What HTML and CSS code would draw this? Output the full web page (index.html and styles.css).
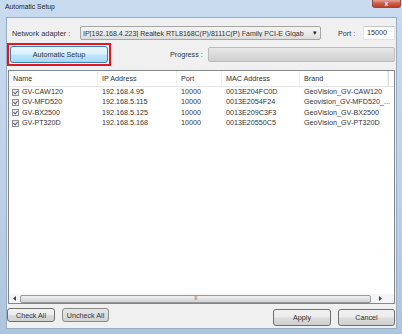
FILE: index.html
```html
<!DOCTYPE html>
<html>
<head>
<meta charset="utf-8">
<link rel="stylesheet" href="styles.css">
</head>
<body>
<div class="window">
  <div class="titlebar">
    <span class="title">Automatic Setup</span>
    <span class="close">x</span>
  </div>
  <div class="client">
    <div class="row-adapter">
      <span class="lbl-adapter">Network adapter :</span>
      <div class="combo"><span class="combo-text">IP[192.168.4.223] Realtek RTL8168C(P)/8111C(P) Family PCI-E Gigab</span><span class="combo-arrow">&#9662;</span></div>
      <span class="lbl-port">Port :</span>
      <div class="port">15000</div>
    </div>
    <div class="row-setup">
      <div class="highlight"><div class="btn btn-auto">Automatic Setup</div></div>
      <span class="lbl-progress">Progress :</span>
      <div class="progress"></div>
    </div>
    <div class="list">
      <div class="list-head">
        <span class="col c-name">Name</span>
        <span class="col c-ip">IP Address</span>
        <span class="col c-port">Port</span>
        <span class="col c-mac">MAC Address</span>
        <span class="col c-brand">Brand</span>
        <span class="col c-rest"></span>
      </div>
      <div class="list-body">
        <div class="list-row">
          <span class="col c-name"><span class="chk"></span>GV-CAW120</span>
          <span class="col c-ip">192.168.4.95</span>
          <span class="col c-port">10000</span>
          <span class="col c-mac">0013E204FC0D</span>
          <span class="col c-brand">GeoVision_GV-CAW120</span>
        </div>
        <div class="list-row">
          <span class="col c-name"><span class="chk"></span>GV-MFD520</span>
          <span class="col c-ip">192.168.5.115</span>
          <span class="col c-port">10000</span>
          <span class="col c-mac">0013E2054F24</span>
          <span class="col c-brand">Geovision_GV-MFD520_...</span>
        </div>
        <div class="list-row">
          <span class="col c-name"><span class="chk"></span>GV-BX2500</span>
          <span class="col c-ip">192.168.5.125</span>
          <span class="col c-port">10000</span>
          <span class="col c-mac">0013E209C3F3</span>
          <span class="col c-brand">GeoVision_GV-BX2500</span>
        </div>
        <div class="list-row">
          <span class="col c-name"><span class="chk"></span>GV-PT320D</span>
          <span class="col c-ip">192.168.5.168</span>
          <span class="col c-port">10000</span>
          <span class="col c-mac">0013E20550C5</span>
          <span class="col c-brand">GeoVision_GV-PT320D</span>
        </div>
      </div>
      <div class="hscroll">
        <span class="arrow arrow-l"><svg width="4" height="5" viewBox="0 0 4 5"><path d="M3 0 L0 2.5 L3 5 Z" fill="#444"/></svg></span>
        <div class="thumb"><span class="grip">III</span></div>
        <span class="arrow arrow-r"><svg width="4" height="5" viewBox="0 0 4 5"><path d="M1 0 L4 2.5 L1 5 Z" fill="#444"/></svg></span>
      </div>
    </div>
    <div class="row-bottom">
      <div class="btn btn-small">Check All</div>
      <div class="btn btn-small btn-uncheck">Uncheck All</div>
      <div class="btn btn-big btn-apply">Apply</div>
      <div class="btn btn-big btn-cancel">Cancel</div>
    </div>
  </div>
</div>
</body>
</html>
```

FILE: styles.css
```css
html, body {
  margin: 0;
  padding: 0;
  background: #bfd2e8;
}
.window {
  width: 402px;
  height: 334px;
  display: flex;
  flex-direction: column;
  background: linear-gradient(to bottom, #c9dbef 0%, #bcd0e7 60%, #aec5df 100%);
  font-family: "Liberation Sans", Arial, sans-serif;
  font-size: 7.2px;
  color: #333;
  box-sizing: border-box;
}
.titlebar {
  height: 17px;
  display: flex;
  justify-content: space-between;
  align-items: flex-start;
  flex: none;
}
.title {
  margin: 3px 0 0 5px;
  font-size: 6.8px;
  color: #1e1e1e;
}
.close {
  width: 29px;
  height: 8px;
  margin-right: 1px;
  background: linear-gradient(to bottom, #e3a294 0%, #cf5b45 50%, #c23c25 100%);
  border: 1px solid #8d4a40;
  border-top: none;
  border-radius: 0 0 3px 3px;
  color: #fff;
  font-size: 7px;
  font-weight: bold;
  line-height: 7px;
  text-align: center;
  box-sizing: border-box;
}
.client {
  flex: 1;
  margin: 0 5px 5px 6px;
  background: #f0f0f0;
  border: 1px solid #97abc3;
  display: flex;
  flex-direction: column;
}
.row-adapter {
  margin-top: 8px;
  height: 14px;
  display: flex;
  align-items: center;
}
.lbl-adapter {
  padding-left: 5px;
  box-sizing: border-box;
  width: 73px;
  font-size: 7.4px;
}
.combo {
  width: 241px;
  height: 14px;
  box-sizing: border-box;
  border: 1px solid #a5a5a5;
  border-radius: 2px;
  background: linear-gradient(to bottom, #f3f3f3 0%, #ebebeb 50%, #dcdcdc 100%);
  display: flex;
  align-items: center;
  padding-left: 2px;
}
.combo-text {
  flex: 1;
  white-space: nowrap;
  overflow: hidden;
  font-size: 7px;
}
.combo-arrow {
  width: 9px;
  font-size: 7px;
  color: #222;
  text-align: center;
  margin-right: 1px;
}
.lbl-port {
  margin-left: 17px;
  width: 25px;
}
.port {
  width: 32px;
  height: 14px;
  box-sizing: border-box;
  background: #fff;
  border: 1px solid #e2e3ea;
  border-top-color: #c5c7cc;
  padding-left: 3px;
  line-height: 12px;
}
.row-setup {
  margin-top: 3px;
  height: 23px;
  display: flex;
  align-items: center;
}
.highlight {
  width: 104px;
  height: 23px;
  box-sizing: border-box;
  border: 2px solid #e0181f;
  padding: 1px;
}
.btn {
  box-sizing: border-box;
  display: flex;
  align-items: center;
  justify-content: center;
  border: 1px solid #707070;
  border-radius: 3px;
  background: linear-gradient(to bottom, #f2f2f2 0%, #ebebeb 48%, #dddddd 52%, #cfcfcf 100%);
  white-space: nowrap;
}
.btn-auto {
  width: 100%;
  height: 100%;
  border-color: #3c7fb1;
  background: linear-gradient(to bottom, #eaf6fd 0%, #d9f0fc 48%, #bee6fd 52%, #a7d9f5 100%);
}
.lbl-progress {
  margin-left: 59px;
  width: 38px;
}
.progress {
  width: 187px;
  height: 15px;
  box-sizing: border-box;
  border: 1px solid #bcbcbc;
  border-radius: 2px;
  background: linear-gradient(to bottom, #e8e8e8 0%, #dadada 50%, #cfcfcf 100%);
}
.list {
  margin: 4px 0 0 1px;
  width: 387px;
  height: 234px;
  box-sizing: border-box;
  border: 1px solid #828790;
  background: #fff;
  display: flex;
  flex-direction: column;
}
.list-head {
  height: 16px;
  box-sizing: border-box;
  border-bottom: 1px solid #e5e5e5;
  display: flex;
  align-items: center;
}
.list-head .col {
  padding-left: 4px;
  height: 15px;
  line-height: 15px;
  box-sizing: border-box;
  border-right: 1px solid #f0f0f0;
}
.list-head .c-rest {
  border-right: none;
  border-left: 1px solid #dcdcdc;
}
.col {
  flex: none;
  white-space: nowrap;
  overflow: hidden;
}
.c-name { width: 89px; }
.c-ip { width: 79px; }
.c-port { width: 45px; }
.c-mac { width: 78px; }
.c-brand { width: 88px; }
.list-row .c-brand { overflow: visible; }
.c-rest { flex: 1; }
.list-body {
  flex: 1;
}
.list-row {
  height: 10.33px;
  line-height: 10.33px;
  display: flex;
  align-items: center;
}
.list-row .col {
  padding-left: 4px;
  box-sizing: border-box;
}
.list-row .c-name {
  padding-left: 3px;
  display: flex;
  align-items: center;
}
.chk {
  width: 7px;
  height: 7px;
  box-sizing: border-box;
  border: 1px solid #8e8f8f;
  background: linear-gradient(135deg, #e6e6e6, #fbfbfb);
  margin-right: 3px;
  position: relative;
}
.chk::after {
  content: "";
  position: absolute;
  left: 1px;
  top: 0px;
  width: 2px;
  height: 3px;
  border-right: 1px solid #4a5f97;
  border-bottom: 1px solid #4a5f97;
  transform: rotate(40deg);
}
.hscroll {
  height: 9px;
  display: flex;
  align-items: center;
  background: #f4f4f4;
}
.arrow {
  width: 11px;
  height: 9px;
  display: flex;
  align-items: center;
  justify-content: center;
}
.arrow-r {
  width: 18px;
  margin-right: 5px;
}
.thumb {
  flex: 1;
  height: 8px;
  box-sizing: border-box;
  border: 1px solid #9a9a9a;
  border-radius: 2px;
  background: linear-gradient(to bottom, #f3f3f3 0%, #e2e2e2 50%, #d2d2d2 100%);
  display: flex;
  align-items: center;
  justify-content: center;
}
.grip {
  font-size: 5px;
  color: #7a7a7a;
  letter-spacing: -0.5px;
  line-height: 5px;
}
.row-bottom {
  margin-top: 4px;
  display: flex;
  align-items: flex-start;
}
.btn-small {
  height: 14px;
  width: 48px;
}
.btn-uncheck {
  margin-left: 7px;
  width: 47px;
  background: linear-gradient(to bottom, #e6e6e6 0%, #dedede 50%, #d2d2d2 100%);
  border-color: #8a8a8a;
}
.btn-big {
  height: 17px;
  margin-top: 1px;
}
.btn-apply {
  margin-left: auto;
  width: 58px;
}
.btn-cancel {
  margin-left: 7px;
  margin-right: 1px;
  width: 57px;
}
```
